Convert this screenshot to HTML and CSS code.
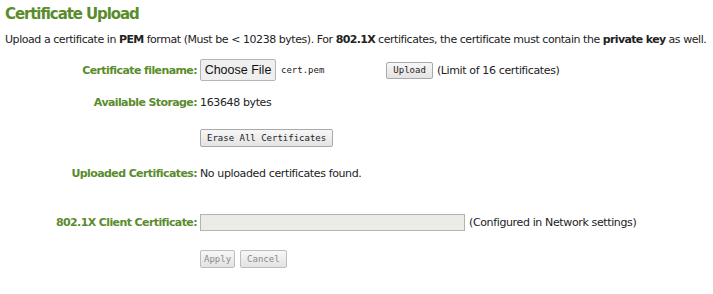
FILE: index.html
```html
<!DOCTYPE html>
<html lang="en">
<head>
  <meta charset="UTF-8" />
  <title>Certificate Upload</title>
  <link rel="stylesheet" href="styles.css">
</head>
<body>

  <div class="page">
    <h2>Certificate Upload</h2>
    <p class="intro">Upload a certificate in <b>PEM</b> format (Must be &lt; 10238 bytes). For <b>802.1X</b> certificates, the certificate must contain the <b>private key</b> as well.</p>

    <form id="certForm">
      <!-- File chooser -->
      <div class="row row-file">
        <label class="label">Certificate filename:</label>
        <div class="value">
          <button type="button" class="choose">Choose File</button>
          <span class="filename">cert.pem</span>
          <button type="button" class="btn btn-upload">Upload</button>
          <span>(Limit of 16 certificates)</span>
        </div>
      </div>

      <!-- Storage -->
      <div class="row row-storage">
        <span class="label">Available Storage:</span>
        <div class="value">163648 bytes</div>
      </div>

      <div class="row row-erase">
        <span class="label"></span>
        <div class="value">
          <button type="button" class="btn">Erase All Certificates</button>
        </div>
      </div>

      <!-- Uploaded list -->
      <div class="row row-list">
        <span class="label">Uploaded Certificates:</span>
        <div class="value">No uploaded certificates found.</div>
      </div>

      <!-- 802.1X -->
      <div class="row row-client">
        <label class="label" for="clientCert">802.1X Client Certificate:</label>
        <div class="value">
          <input type="text" id="clientCert" class="select" disabled />
          <span>(Configured in Network settings)</span>
        </div>
      </div>

      <div class="row row-actions">
        <span class="label"></span>
        <div class="value actions">
          <button type="submit" class="btn btn-apply" disabled>Apply</button>
          <button type="reset" class="btn" disabled>Cancel</button>
        </div>
      </div>
    </form>
  </div>

</body>
</html>
```

FILE: styles.css
```css
/* Global */
body {
  margin: 0;
  padding: 0;
  font-family: 'DejaVu Sans', sans-serif;
  font-size: 11px;
  letter-spacing: -0.37px;
  color: #222;
  background: #fff;
}

.page {
  padding: 4px 5px;
}

h2 {
  margin: 0;
  font-size: 15px;
  letter-spacing: -1.1px;
  color: #5a8c2c;
  line-height: 20px;
}

.intro {
  margin: 9px 0 0;
  line-height: 14px;
  letter-spacing: -0.45px;
  white-space: nowrap;
}

.intro b {
  letter-spacing: -0.65px;
}

/* Form rows */
.row {
  display: flex;
  align-items: center;
}

.label {
  width: 192px;
  padding-right: 3px;
  text-align: right;
  font-weight: bold;
  letter-spacing: -0.6px;
  color: #5a8c2c;
  flex-shrink: 0;
}

.value {
  display: flex;
  align-items: center;
  gap: 4px;
}

.row-file { margin-top: 12px; height: 22px; }
.row-storage { margin-top: 12px; height: 18px; }
.row-erase { margin-top: 18px; height: 18px; }
.row-list { margin-top: 17px; height: 18px; }
.row-client { margin-top: 32px; height: 17px; }
.row-actions { margin-top: 19px; height: 17px; }

/* Buttons */
.choose {
  height: 22px;
  width: 76px;
  padding: 0;
  margin-right: 1px;
  font-family: 'Liberation Sans', sans-serif;
  font-size: 12.5px;
  letter-spacing: 0;
  color: #111;
  background: #efefef;
  border: 1px solid #b5b5b5;
  border-radius: 2px;
}

.filename {
  font-family: 'DejaVu Sans Mono', monospace;
  font-size: 9px;
  letter-spacing: 0;
  margin-right: 58px;
}

.btn {
  height: 18px;
  padding: 0 6px;
  font-family: 'DejaVu Sans Mono', monospace;
  font-size: 9px;
  letter-spacing: 0;
  color: #222;
  background: linear-gradient(#f7f7f7, #e3e3e3);
  border: 1px solid #a9a9a9;
  border-radius: 2px;
}

.btn-upload {
  height: 17px;
}

.btn-apply {
  padding: 0 3px;
}

.btn:disabled {
  color: #8a8a8a;
  border-color: #bdbdbd;
}

.actions {
  gap: 5px;
}

.select {
  width: 265px;
  height: 17px;
  box-sizing: border-box;
  margin: 0;
  background: #ebebe8;
  border: 1px solid #b3b3b3;
}
```
